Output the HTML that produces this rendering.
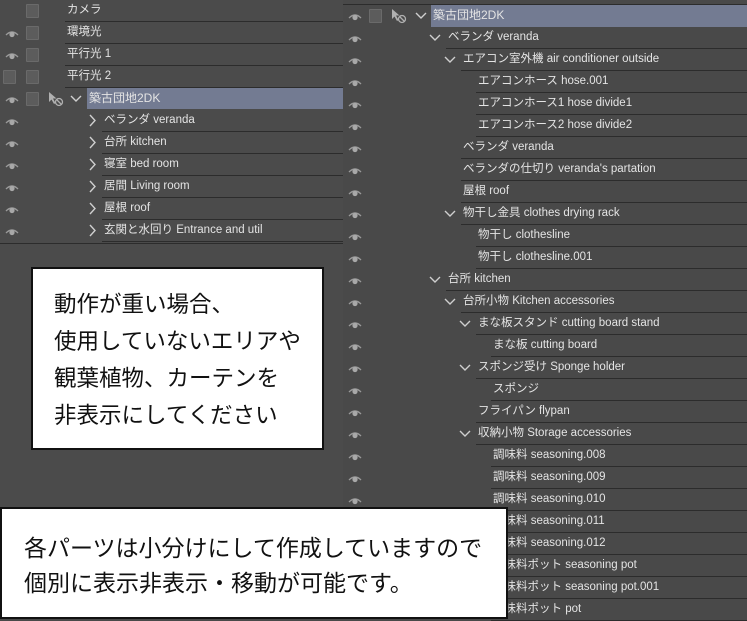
<!DOCTYPE html>
<html><head><meta charset="utf-8"><style>
*{margin:0;padding:0;box-sizing:border-box}
body{width:747px;height:619px;overflow:hidden;background:#494949;position:relative;font-family:"Liberation Sans","Noto Sans CJK JP",sans-serif;}
.r{position:absolute;height:22px;border-bottom:1px solid #2c2c2c;color:#e4e4e4;font-size:11.5px;line-height:21px;white-space:nowrap;padding-left:2px}
.hl{background:#737b92;border-bottom:none;font-size:12px}
.eye{position:absolute;width:14px;height:8px}
.cb{position:absolute;width:13px;height:14px;background:#5c5c5c;border:1px solid #6a6a6a;border-radius:1px}
.box{position:absolute;background:#fff;border:2px solid #111;color:#111;font-family:"Liberation Sans","Noto Sans CJK JP",sans-serif;white-space:nowrap}
</style></head><body>
<div style="position:absolute;left:0;top:0;width:343px;height:507px;background:#4b4b4b"></div>
<div style="position:absolute;left:343px;top:4px;width:404px;height:1px;background:#2c2c2c"></div>
<div id="c"></div>
<script>
var c=document.getElementById('c'),h='';
function eye(x,y){return '<svg class="eye" style="left:'+x+'px;top:'+y+'px" viewBox="0 0 14 8"><path d="M1 5 Q7 -1 13 5" stroke="#9a9a9a" fill="none" stroke-width="1.3"/><circle cx="7" cy="4.5" r="2.6" fill="#a8a8a8"/></svg>';}
function ptr(x,y){return '<svg style="position:absolute;left:'+x+'px;top:'+y+'px" width="18" height="16" viewBox="0 0 18 16"><path d="M2 1 L2 11 L4.5 8.5 L7 13 L8.5 12 L6 7.5 L9.5 7.5 Z" fill="#b0b0b0"/><circle cx="12" cy="11" r="3.5" stroke="#b0b0b0" fill="none" stroke-width="1.3"/><path d="M9.5 8.5 L14.5 13.5" stroke="#b0b0b0" stroke-width="1.3"/></svg>';}
function chev(x,y,open){return open?'<svg style="position:absolute;left:'+x+'px;top:'+(y+6)+'px" width="12" height="10"><path d="M1 2 L6 7 L11 2" stroke="#cfcfcf" fill="none" stroke-width="1.4"/></svg>':'<svg style="position:absolute;left:'+(x+2)+'px;top:'+(y+4)+'px" width="10" height="14"><path d="M2 1 L7 6.5 L2 12" stroke="#cfcfcf" fill="none" stroke-width="1.4"/></svg>';}
var L=[[0,'カメラ',0,0],[1,'環境光',1,0],[1,'平行光 1',1,0],[2,'平行光 2',2,0],[1,'築古団地2DK',1,'root'],
[1,'ベランダ veranda',0,1],[1,'台所 kitchen',0,1],[1,'寝室 bed room',0,1],[1,'居間 Living room',0,1],[1,'屋根 roof',0,1],[1,'玄関と水回り Entrance and util',0,1]];
L.forEach(function(a,i){var t=1+22*i;
 if(a[0]==1)h+=eye(5,t+7);
 if(a[0]==2)h+='<div class="cb" style="left:3px;top:'+(t+3)+'px"></div>';
 if(a[2]||a[0]==0)h+='<div class="cb" style="left:26px;top:'+(t+3)+'px"></div>';
 if(a[3]=='root'){h+=ptr(47,t+2)+chev(70,t-1,1)+'<div class="r hl" style="left:87px;top:'+(t-1)+'px;width:256px;height:21px">築古団地2DK</div>';}
 else if(a[3]==1){h+=chev(86,t-1,0)+'<div class="r" style="left:102px;top:'+(t-1)+'px;width:241px">'+a[1]+'</div>';}
 else h+='<div class="r" style="left:65px;top:'+(t-1)+'px;width:278px">'+a[1]+'</div>';
});
h+='<div style="position:absolute;left:0;top:243px;width:343px;height:1px;background:#2c2c2c"></div>';
var R=[[0,'築古団地2DK',1],[1,'ベランダ veranda',1],[2,'エアコン室外機 air conditioner outside',1],[3,'エアコンホース hose.001'],[3,'エアコンホース1 hose divide1'],[3,'エアコンホース2 hose divide2'],[2,'ベランダ veranda'],[2,"ベランダの仕切り veranda's partation"],[2,'屋根 roof'],[2,'物干し金具 clothes drying rack',1],[3,'物干し clothesline'],[3,'物干し clothesline.001'],[1,'台所 kitchen',1],[2,'台所小物 Kitchen accessories',1],[3,'まな板スタンド cutting board stand',1],[4,'まな板 cutting board'],[3,'スポンジ受け Sponge holder',1],[4,'スポンジ'],[3,'フライパン flypan'],[3,'収納小物 Storage accessories',1],[4,'調味料 seasoning.008'],[4,'調味料 seasoning.009'],[4,'調味料 seasoning.010'],[4,'調味料 seasoning.011'],[4,'調味料 seasoning.012'],[4,'調味料ポット seasoning pot'],[4,'調味料ポット seasoning pot.001'],[4,'調味料ポット pot']];
var TX=[431,446,461,476,491];
R.forEach(function(a,i){var t=5+22*i,x=TX[a[0]];
 h+=eye(348,t+8);
 if(i==0){h+='<div class="cb" style="left:369px;top:'+(t+4)+'px"></div>'+ptr(390,t+3)+chev(415,t,1)+'<div class="r hl" style="left:431px;top:'+t+'px;width:316px;height:22px">築古団地2DK</div>';return;}
 if(a[2])h+=chev(x-17,t,1);
 h+='<div class="r" style="left:'+x+'px;top:'+t+'px;width:'+(747-x)+'px">'+a[1]+'</div>';
});
c.innerHTML=h;
</script>
<div class="box" style="left:31px;top:267px;width:293px;height:183px;padding:17px 0 0 21px;font-size:22.5px;line-height:37px">動作が重い場合、<br>使用していないエリアや<br>観葉植物、カーテンを<br>非表示にしてください</div>
<div class="box" style="left:0;top:507px;width:508px;height:112px;padding:22px 0 0 22px;font-size:23px;line-height:35px">各パーツは小分けにして作成していますので<br>個別に表示非表示・移動が可能です。</div>
</body></html>
